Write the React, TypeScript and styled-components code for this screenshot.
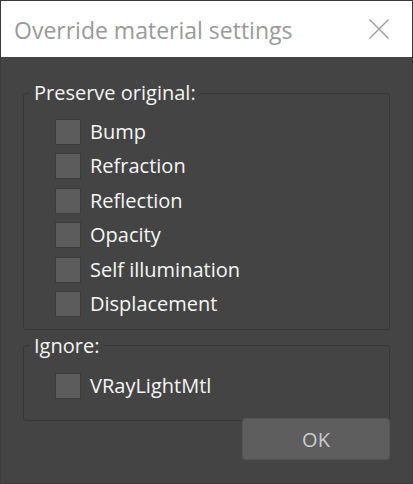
import React from "react";
import styled, { createGlobalStyle } from "styled-components";

const GlobalStyle = createGlobalStyle`
    html, body {
        margin: 0;
        padding: 0;
        background: #444444;
    }
    * {
        box-sizing: border-box;
    }
`;

const Window = styled.div`
    width: 413px;
    height: 484px;
    border: 1px solid #3a3a3a;
    background: #444444;
    display: flex;
    flex-direction: column;
    font-family: "Open Sans", "Noto Sans", sans-serif;
`;

const TitleBar = styled.div`
    height: 56px;
    background: #ffffff;
    display: flex;
    align-items: center;
    justify-content: space-between;
    padding: 0 23px 0 13px;
`;

const Title = styled.div`
    font-size: 23px;
    line-height: 30px;
    color: #9a9a9a;
    margin-top: 1px;
`;

const CloseButton = styled.div`
    width: 20px;
    height: 20px;
    display: flex;
`;

const Body = styled.div`
    flex: 1;
    display: flex;
    flex-direction: column;
    padding: 24px 22px 0 22px;
    gap: 4px;
`;

const Group = styled.fieldset`
    margin: 0;
    border: 1px solid #363636;
    border-radius: 3px;
    padding: 0;
    min-width: 0;
`;

const Legend = styled.legend`
    margin-left: 6px;
    padding: 0 4px;
    font-size: 20px;
    line-height: 24px;
    color: #f4f4f4;
`;

const List = styled.div<{ $top: number; $bottom: number }>`
    display: flex;
    flex-direction: column;
    gap: 8.4px;
    padding: ${(p) => p.$top}px 0 ${(p) => p.$bottom}px 31px;
`;

const Row = styled.label`
    display: flex;
    align-items: center;
    gap: 9px;
    height: 26px;
`;

const Box = styled.span`
    flex: none;
    width: 26px;
    height: 26px;
    background: #5c5c5c;
    border: 1px solid #3b3b3b;
`;

const Label = styled.span`
    font-size: 20px;
    line-height: 26px;
    color: #f6f6f6;
`;

const Footer = styled.div`
    display: flex;
    justify-content: flex-end;
    margin-top: -7px;
`;

const Button = styled.div`
    width: 148px;
    height: 42px;
    border-radius: 4px;
    background: #5e5e5e;
    border: 1px solid #555555;
    color: #cccccc;
    font-size: 20px;
    display: flex;
    align-items: center;
    justify-content: center;
    padding-top: 1px;
`;

const preserve = ["Bump", "Refraction", "Reflection", "Opacity", "Self illumination", "Displacement"];

const App = () => {
    return (
        <Window>
            <GlobalStyle />
            <TitleBar>
                <Title>Override material settings</Title>
                <CloseButton>
                    <svg width="20" height="20" viewBox="0 0 20 20">
                        <path d="M0.5 0.5 L19.5 19.5 M19.5 0.5 L0.5 19.5" stroke="#9a9a9a" strokeWidth="1.3" fill="none" />
                    </svg>
                </CloseButton>
            </TitleBar>
            <Body>
                <Group>
                    <Legend>Preserve original:</Legend>
                    <List $top={14} $bottom={12}>
                        {preserve.map((item) => (
                            <Row key={item}>
                                <Box />
                                <Label>{item}</Label>
                            </Row>
                        ))}
                    </List>
                </Group>
                <Group>
                    <Legend>Ignore:</Legend>
                    <List $top={15} $bottom={21}>
                        <Row>
                            <Box />
                            <Label>VRayLightMtl</Label>
                        </Row>
                    </List>
                </Group>
                <Footer>
                    <Button>OK</Button>
                </Footer>
            </Body>
        </Window>
    );
};

export default App;
